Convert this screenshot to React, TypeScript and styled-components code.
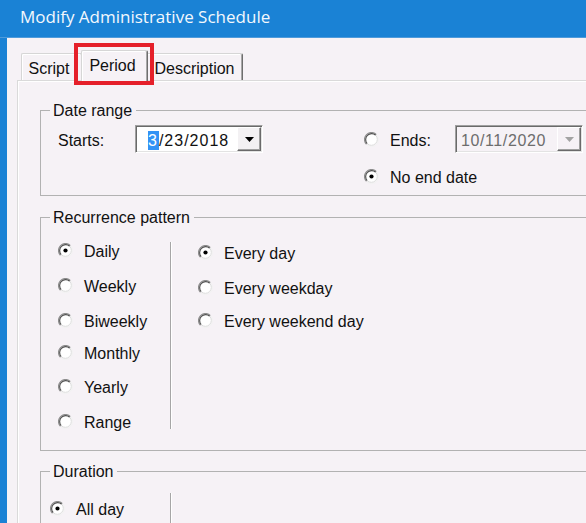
import React from "react";
import styled, { createGlobalStyle } from "styled-components";

const BG = "#f6f2f6";

const Global = createGlobalStyle`
  html, body { margin: 0; padding: 0; background: ${BG}; overflow: hidden; }
  #root { width: 586px; height: 523px; }
`;

const Window = styled.div`
  width: 586px;
  height: 523px;
  display: flex;
  flex-direction: column;
  overflow: hidden;
  background: ${BG};
  font-family: "Liberation Sans", Arial, sans-serif;
  font-size: 16px;
  color: #111;
`;

const TitleBar = styled.div`
  flex: none;
  height: 38px;
  box-sizing: border-box;
  background: #1a82d5;
  border-bottom: 1px solid #4f9bdb;
  color: #f3f8fd;
  display: flex;
  align-items: center;
  padding: 0 0 5px 20px;
  font-family: "Open Sans", "Noto Sans", sans-serif;
  font-size: 17px;
`;

const Body = styled.div`
  flex: 1;
  display: flex;
  min-height: 0;
`;

const FrameEdge = styled.div`
  flex: none;
  width: 7px;
  background: #1a82d5;
`;

const Content = styled.div`
  flex: 1;
  display: flex;
  flex-direction: column;
  padding-left: 10px;
  min-width: 0;
`;

const TabStrip = styled.div`
  flex: none;
  height: 42px;
  display: flex;
  align-items: flex-end;
  padding-left: 4px;
`;

const Tab = styled.div<{ $active?: boolean; $w: number; $pr?: number }>`
  position: relative;
  box-sizing: border-box;
  width: ${(p) => p.$w}px;
  height: ${(p) => (p.$active ? 31 : 27)}px;
  margin: ${(p) => (p.$active ? "0 -2px -1px" : "0")};
  z-index: ${(p) => (p.$active ? 2 : 0)};
  background: ${BG};
  border-top: 1px solid #d6d6d6;
  border-left: 1px solid #d6d6d6;
  border-right: 1px solid #6e6e6e;
  box-shadow: inset -1px 0 0 #a8a8a8, inset 1px 1px 0 #fff;
  border-radius: 2px 2px 0 0;
  display: flex;
  justify-content: center;
  padding: 6px ${(p) => p.$pr ?? 0}px 0 0;
  line-height: 18px;
`;

const Highlight = styled.div`
  position: absolute;
  left: -8px;
  top: -8px;
  width: 80px;
  height: 42px;
  box-sizing: border-box;
  border: 4px solid #e5202a;
  pointer-events: none;
`;

const Panel = styled.div`
  flex: 1;
  box-sizing: border-box;
  width: 640px;
  border-top: 1px solid #dadada;
  border-left: 1px solid #dadada;
  box-shadow: inset 1px 1px 0 #fff;
  padding: 21px 0 0 22px;
  display: flex;
  flex-direction: column;
`;

const Group = styled.fieldset<{ $mt?: number; $h?: number }>`
  margin: ${(p) => p.$mt ?? 0}px 0 0 0;
  padding: 0;
  min-width: 0;
  width: 590px;
  box-sizing: border-box;
  border: 1px solid #b2b2b2;
  ${(p) => (p.$h ? `height: ${p.$h}px;` : "")}
`;

const Legend = styled.legend`
  margin-left: 9px;
  padding: 0 4px 0 3px;
  line-height: 17px;
  font-size: 16px;
  background: ${BG};
`;

const DateRow = styled.div`
  display: flex;
  align-items: flex-start;
  padding: 6px 0 7px 17px;
`;

const FieldLabel = styled.div<{ $w: number }>`
  width: ${(p) => p.$w}px;
  height: 28px;
  box-sizing: border-box;
  padding-top: 4px;
  display: flex;
  align-items: center;
  flex: none;
`;

const EndsCol = styled.div`
  display: flex;
  flex-direction: column;
  margin-left: 101px;
`;

const Picker = styled.div<{ $disabled?: boolean; $pl: number }>`
  flex: none;
  box-sizing: border-box;
  width: 128px;
  height: 28px;
  display: flex;
  align-items: center;
  border: 1px solid;
  border-color: #a0a0a0 #ffffff #ffffff #a0a0a0;
  box-shadow: inset 1px 1px 0 #6a6a6a, inset -1px -1px 0 #e3e3e3;
  background: ${(p) => (p.$disabled ? BG : "#fff")};
  padding: 1px 1px 1px ${(p) => p.$pl}px;
  color: ${(p) => (p.$disabled ? "#6d6d6d" : "#111")};
`;

const PickerText = styled.span<{ $ls: number }>`
  line-height: 19px;
  padding-top: 3px;
  letter-spacing: ${(p) => p.$ls}px;
`;

const Selected = styled.span`
  background: #3393f5;
  color: #fff;
  display: inline-block;
  line-height: 19px;
  padding-right: 1px;
`;

const DropBtn = styled.div<{ $disabled?: boolean }>`
  margin-left: auto;
  flex: none;
  width: 24px;
  height: 24px;
  box-sizing: border-box;
  background: ${(p) => (p.$disabled ? BG : "#f3f1f3")};
  border: 1px solid;
  border-color: #ffffff #6a6a6a #6a6a6a #ffffff;
  box-shadow: inset -1px -1px 0 #a0a0a0;
  display: flex;
  align-items: center;
  justify-content: center;
`;

const RadioRow = styled.label<{ $mt?: number; $h?: number }>`
  display: flex;
  align-items: center;
  gap: 11px;
  height: ${(p) => p.$h ?? 24}px;
  margin-top: ${(p) => p.$mt ?? 0}px;
  white-space: nowrap;
`;

const Caption = styled.span`
  padding-top: 4px;
  line-height: 18px;
`;

const Split = styled.div`
  display: flex;
  align-items: flex-start;
`;

const Col = styled.div<{ $w?: number; $pl: number; $pb?: number }>`
  display: flex;
  flex-direction: column;
  flex: none;
  box-sizing: border-box;
  ${(p) => (p.$w ? `width: ${p.$w}px;` : "")}
  padding: 0 0 ${(p) => p.$pb ?? 0}px ${(p) => p.$pl}px;
`;

const VSep = styled.div<{ $mt: number; $h: number }>`
  flex: none;
  width: 1px;
  margin-top: ${(p) => p.$mt}px;
  height: ${(p) => p.$h}px;
  background: #a6a6a6;
  box-shadow: 1px 0 0 #fff;
`;

const Radio: React.FC<{ checked?: boolean }> = ({ checked }) => (
  <svg width="15" height="15" viewBox="0 0 15 15" style={{ flex: "none" }}>
    <circle cx="7.5" cy="7.5" r="6.5" fill="#fff" />
    <path d="M2.55 12.45 A7 7 0 0 1 12.45 2.55" stroke="#8e8e8e" strokeWidth="1.2" fill="none" />
    <path d="M12.45 2.55 A7 7 0 0 1 2.55 12.45" stroke="#f2f2f2" fill="none" />
    <path d="M3.26 11.74 A6 6 0 0 1 11.74 3.26" stroke="#4e4e4e" strokeWidth="1.1" fill="none" />
    <path d="M11.74 3.26 A6 6 0 0 1 3.26 11.74" stroke="#dcdcdc" fill="none" />
    {checked && <circle cx="7.5" cy="7.5" r="2.1" fill="#000" />}
  </svg>
);

const Arrow: React.FC<{ color: string }> = ({ color }) => (
  <svg width="9" height="5" viewBox="0 0 9 5">
    <polygon points="0,0 9,0 4.5,5" fill={color} />
  </svg>
);

const patterns = [
  { label: "Daily", mt: 12, checked: true },
  { label: "Weekly", mt: 11 },
  { label: "Biweekly", mt: 11 },
  { label: "Monthly", mt: 8 },
  { label: "Yearly", mt: 10 },
  { label: "Range", mt: 11 },
];

const dailyOpts = [
  { label: "Every day", mt: 14, checked: true },
  { label: "Every weekday", mt: 11 },
  { label: "Every weekend day", mt: 9 },
];

export default function App() {
  return (
    <Window>
      <Global />
      <TitleBar>Modify Administrative Schedule</TitleBar>
      <Body>
        <FrameEdge />
        <Content>
          <TabStrip>
            <Tab $w={62} $pr={6}>Script</Tab>
            <Tab $w={67} $pr={4} $active>
              Period
              <Highlight />
            </Tab>
            <Tab $w={97}>Description</Tab>
          </TabStrip>
          <Panel>
            <Group>
              <Legend>Date range</Legend>
              <DateRow>
                <FieldLabel $w={77}>Starts:</FieldLabel>
                <Picker $pl={12}>
                  <PickerText $ls={1}>
                    <Selected>3</Selected>/23/2018
                  </PickerText>
                  <DropBtn>
                    <Arrow color="#000" />
                  </DropBtn>
                </Picker>
                <EndsCol>
                  <RadioRow $h={28}>
                    <Radio />
                    <FieldLabel $w={54}>Ends:</FieldLabel>
                    <Picker $pl={5} $disabled>
                      <PickerText $ls={0.6}>10/11/2020</PickerText>
                      <DropBtn $disabled>
                        <Arrow color="#a3a3a3" />
                      </DropBtn>
                    </Picker>
                  </RadioRow>
                  <RadioRow $mt={11}>
                    <Radio checked />
                    <Caption>No end date</Caption>
                  </RadioRow>
                </EndsCol>
              </DateRow>
            </Group>

            <Group $mt={13}>
              <Legend>Recurrence pattern</Legend>
              <Split>
                <Col $w={129} $pl={17} $pb={17}>
                  {patterns.map((p) => (
                    <RadioRow key={p.label} $mt={p.mt}>
                      <Radio checked={p.checked} />
                      <Caption>{p.label}</Caption>
                    </RadioRow>
                  ))}
                </Col>
                <VSep $mt={16} $h={187} />
                <Col $pl={27}>
                  {dailyOpts.map((p) => (
                    <RadioRow key={p.label} $mt={p.mt}>
                      <Radio checked={p.checked} />
                      <Caption>{p.label}</Caption>
                    </RadioRow>
                  ))}
                </Col>
              </Split>
            </Group>

            <Group $mt={12} $h={120}>
              <Legend>Duration</Legend>
              <Split>
                <Col $w={129} $pl={9}>
                  <RadioRow $mt={16}>
                    <Radio checked />
                    <Caption>All day</Caption>
                  </RadioRow>
                </Col>
                <VSep $mt={13} $h={80} />
              </Split>
            </Group>
          </Panel>
        </Content>
      </Body>
    </Window>
  );
}
